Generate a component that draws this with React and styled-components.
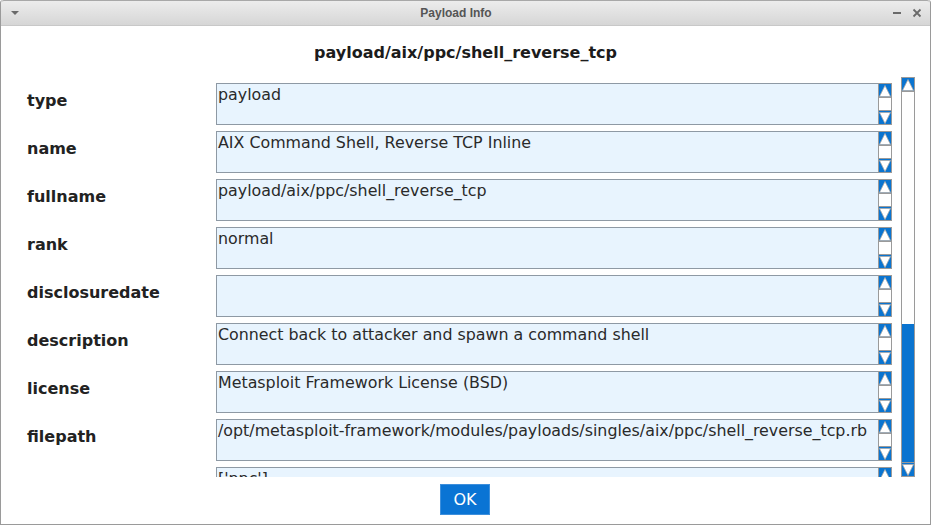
import React from 'react';
import styled, { createGlobalStyle } from 'styled-components';

const GlobalStyle = createGlobalStyle`
	html, body {
		margin: 0;
		padding: 0;
		background: #ffffff;
	}
	body {
		font-family: 'DejaVu Sans', sans-serif;
	}
`;

const Window = styled.div`
	width: 931px;
	height: 525px;
	box-sizing: border-box;
	display: flex;
	flex-direction: column;
	border: 1px solid #9a9a9a;
	border-top: none;
	border-radius: 3px 3px 0 0;
	overflow: hidden;
	background: #ffffff;
`;

const TitleBar = styled.div`
	height: 26px;
	flex-shrink: 0;
	display: flex;
	align-items: center;
	justify-content: space-between;
	padding: 0 8px 0 9px;
	box-sizing: border-box;
	background: linear-gradient(#ececec, #d6d6d6);
	border-top: 1px solid #a8a8a8;
	border-bottom: 1px solid #c8c8c8;
	border-radius: 3px 3px 0 0;
`;

const TitleText = styled.span`
	font-family: 'Liberation Sans', sans-serif;
	font-weight: bold;
	font-size: 12px;
	color: #555555;
`;

const TitleButtons = styled.div`
	display: flex;
	gap: 10px;
	align-items: center;
`;

const Heading = styled.div`
	height: 51px;
	flex-shrink: 0;
	display: flex;
	align-items: center;
	justify-content: center;
	font-weight: bold;
	font-size: 16px;
	color: #1c1c1c;
	padding-top: 1px;
	box-sizing: border-box;
`;

const Middle = styled.div`
	display: flex;
	height: 400px;
	flex-shrink: 0;
	padding-right: 15px;
`;

const ScrollContent = styled.div`
	flex: 1;
	overflow: hidden;
	padding: 6px 9px 0 26px;
	display: flex;
	flex-direction: column;
	gap: 6px;
`;

const Row = styled.div`
	display: grid;
	grid-template-columns: 189px 1fr;
	height: 42px;
	flex-shrink: 0;
`;

const Label = styled.div`
	font-weight: bold;
	font-size: 16px;
	color: #222222;
	padding-top: 8px;
`;

const Field = styled.div`
	display: flex;
	height: 42px;
`;

const FieldBox = styled.div`
	flex: 1;
	box-sizing: border-box;
	border: 1px solid #8e99a4;
	border-right: none;
	background: #e8f4fe;
	font-size: 15.85px;
	color: #2a2a2a;
	padding: 1px 1px;
	line-height: 19px;
	white-space: nowrap;
	overflow: hidden;
`;

const Bar = styled.div`
	width: ${(p) => p.$width}px;
	display: flex;
	flex-direction: column;
	box-sizing: border-box;
	background: #ffffff;
	border: 1px solid #9a9a9a;
	flex-shrink: 0;
`;

const Track = styled.div`
	flex: 1;
	display: flex;
	flex-direction: column;
	justify-content: flex-end;
`;

const Thumb = styled.div`
	height: ${(p) => p.$size}px;
	background: #0a74d0;
`;

const Arrow = styled.div`
	height: 13px;
	flex-shrink: 0;
	background: #0a74d0;
	display: flex;
	align-items: center;
	justify-content: center;
	border-bottom: ${(p) => (p.$up ? '1px solid #9a9a9a' : 'none')};
	border-top: ${(p) => (p.$up ? 'none' : '1px solid #9a9a9a')};
`;

const Footer = styled.div`
	flex: 1;
	display: flex;
	justify-content: center;
	padding: 7px 1px 0 0;
`;

const OkButton = styled.button`
	width: 50px;
	height: 31px;
	background: #0a74d4;
	border: 1px solid #3d8fdc;
	color: #ffffff;
	font-family: 'DejaVu Sans', sans-serif;
	font-size: 16px;
	padding: 0;
	cursor: pointer;
`;

const Tri = ({ up }) => (
	<svg width="12" height="12" viewBox="0 0 12 12">
		<polygon
			points={up ? '6,0.5 11.5,11.5 0.5,11.5' : '0.5,0.5 11.5,0.5 6,11.5'}
			fill="#ffffff"
			stroke="#a8a8a8"
			strokeWidth="0.8"
		/>
	</svg>
);

const ScrollBar = ({ width, thumb }) => (
	<Bar $width={width}>
		<Arrow $up>
			<Tri up />
		</Arrow>
		<Track>{thumb ? <Thumb $size={thumb} /> : null}</Track>
		<Arrow>
			<Tri />
		</Arrow>
	</Bar>
);

const fields = [
	['type', 'payload'],
	['name', 'AIX Command Shell, Reverse TCP Inline'],
	['fullname', 'payload/aix/ppc/shell_reverse_tcp'],
	['rank', 'normal'],
	['disclosuredate', ''],
	['description', 'Connect back to attacker and spawn a command shell'],
	['license', 'Metasploit Framework License (BSD)'],
	['filepath', '/opt/metasploit-framework/modules/payloads/singles/aix/ppc/shell_reverse_tcp.rb'],
	['arch', "['ppc']"],
];

const App = () => {
	return (
		<>
			<GlobalStyle />
			<Window>
				<TitleBar>
					<svg width="10" height="6" viewBox="0 0 10 6">
						<polygon points="1,1 9,1 5,5" fill="#6a6a6a" />
					</svg>
					<TitleText>Payload Info</TitleText>
					<TitleButtons>
						<svg width="10" height="10" viewBox="0 0 10 10">
							<rect x="1" y="4" width="8" height="2" fill="#6a6a6a" />
						</svg>
						<svg width="10" height="10" viewBox="0 0 10 10">
							<path d="M1.5 1.5 L8.5 8.5 M8.5 1.5 L1.5 8.5" stroke="#6a6a6a" strokeWidth="1.8" />
						</svg>
					</TitleButtons>
				</TitleBar>
				<Heading>payload/aix/ppc/shell_reverse_tcp</Heading>
				<Middle>
					<ScrollContent>
						{fields.map(([label, value]) => (
							<Row key={label}>
								<Label>{label}</Label>
								<Field>
									<FieldBox>{value}</FieldBox>
									<ScrollBar width={14} />
								</Field>
							</Row>
						))}
					</ScrollContent>
					<ScrollBar width={14} thumb={138} />
				</Middle>
				<Footer>
					<OkButton>OK</OkButton>
				</Footer>
			</Window>
		</>
	);
};

export default App;
